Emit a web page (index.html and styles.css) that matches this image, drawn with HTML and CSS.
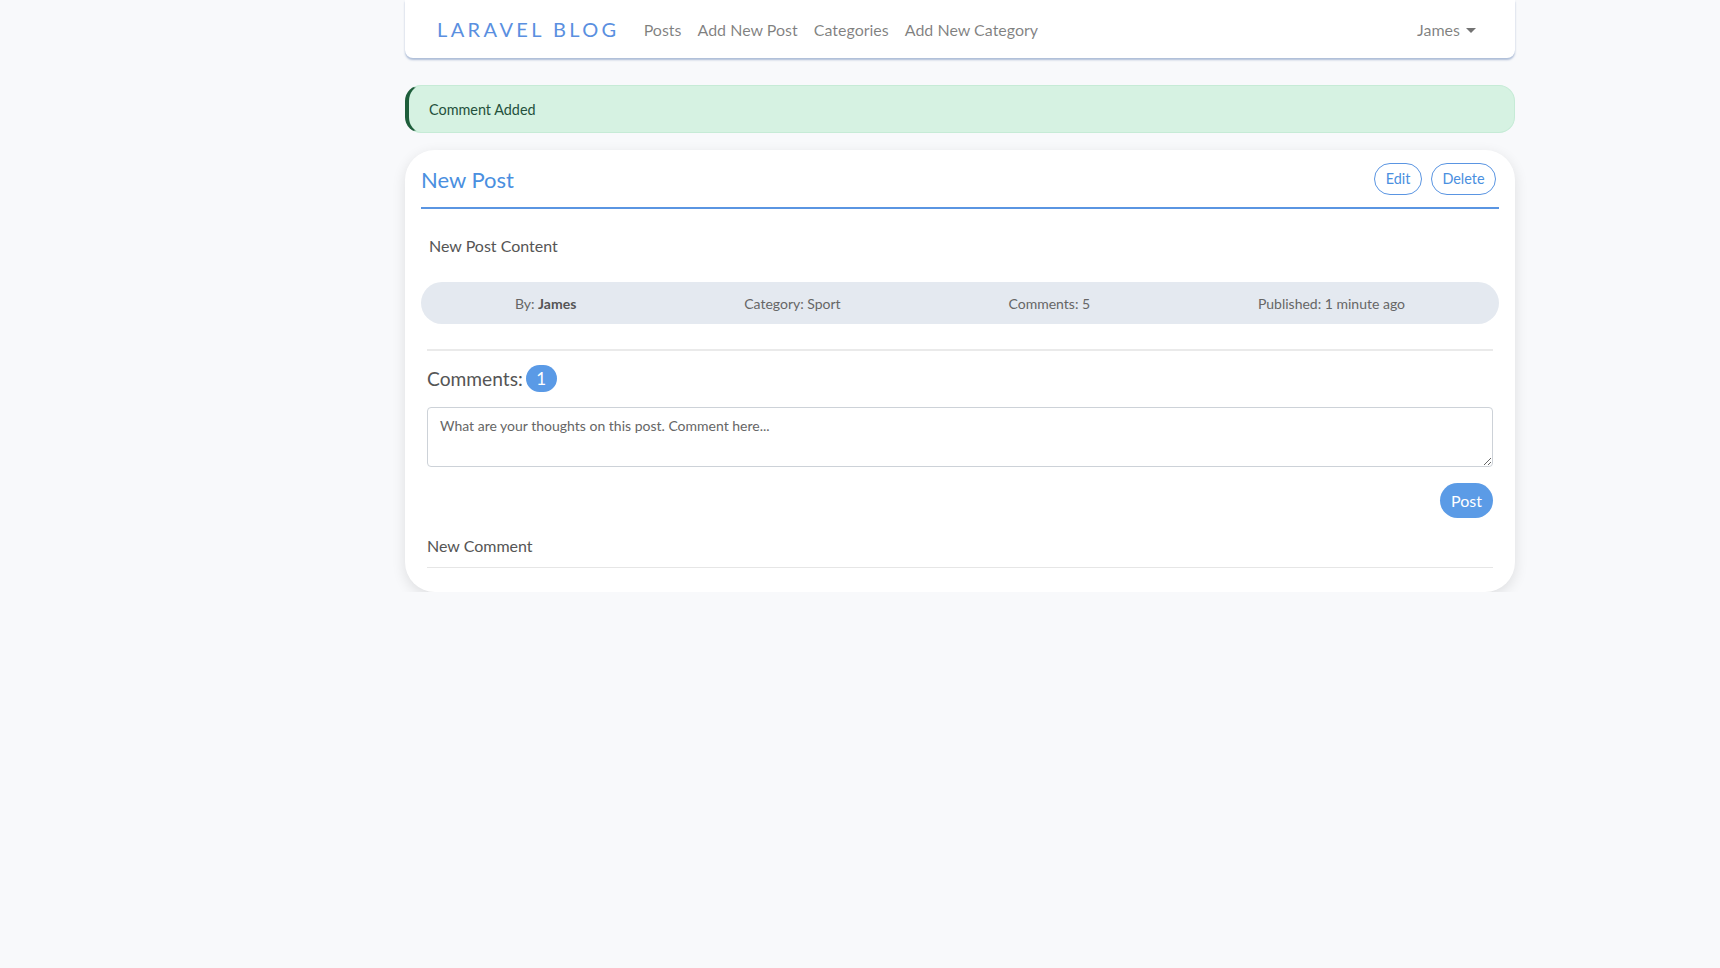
FILE: index.html
```html
<!DOCTYPE html>
<html lang="en">
<head>
<meta charset="utf-8">
<title>Laravel Blog</title>
<link rel="stylesheet" href="styles.css">
</head>
<body>
<div class="page">
  <nav class="navbar">
    <a class="brand" href="#">Laravel Blog</a>
    <ul class="nav-links">
      <li><a href="#">Posts</a></li>
      <li><a href="#">Add New Post</a></li>
      <li><a href="#">Categories</a></li>
      <li><a href="#">Add New Category</a></li>
    </ul>
    <div class="user"><a href="#">James<span class="caret"></span></a></div>
  </nav>

  <div class="alert">Comment Added</div>

  <section class="card">
    <header class="card-header">
      <h2 class="post-title">New Post</h2>
      <div class="actions">
        <button class="btn-outline">Edit</button>
        <button class="btn-outline">Delete</button>
      </div>
    </header>
    <p class="post-content">New Post Content</p>
    <div class="meta">
      <span>By: <b>James</b></span>
      <span>Category: Sport</span>
      <span>Comments: 5</span>
      <span>Published: 1 minute ago</span>
    </div>
    <div class="comments">
      <h3 class="comments-title">Comments: <span class="badge">1</span></h3>
      <form class="comment-form">
        <textarea placeholder="What are your thoughts on this post. Comment here..."></textarea>
        <div class="form-actions"><button type="button" class="btn-primary">Post</button></div>
      </form>
      <div class="comment">New Comment</div>
    </div>
  </section>
</div>
</body>
</html>
```

FILE: styles.css
```css
* { box-sizing: border-box; }
html, body { margin: 0; padding: 0; }
body {
  background: #f8f9fb;
  font-family: Lato, "Open Sans", "Liberation Sans", sans-serif;
  color: #555;
  font-size: 16px;
}
.page {
  width: 1110px;
  margin-left: 405px;
}
.navbar {
  height: 58px;
  background: #fff;
  display: flex;
  align-items: center;
  padding: 0 31px 0 32px;
  border-radius: 0 0 8px 8px;
  box-shadow: 0 2px 2px rgba(100, 130, 180, 0.5);
}
.brand {
  color: #5a8fe0;
  text-decoration: none;
  text-transform: uppercase;
  font-size: 20px;
  letter-spacing: 3.4px;
  margin-right: 16px;
}
.nav-links {
  list-style: none;
  margin: 0;
  padding: 0;
  display: flex;
}
.nav-links a, .user a {
  display: block;
  padding: 0 8px;
  color: rgba(0, 0, 0, 0.5);
  text-decoration: none;
  font-size: 16px;
}
.user { margin-left: auto; }
.caret {
  display: inline-block;
  margin-left: 6px;
  vertical-align: 3px;
  border-top: 5px solid rgba(0, 0, 0, 0.55);
  border-left: 5px solid transparent;
  border-right: 5px solid transparent;
}
.alert {
  margin-top: 27px;
  height: 48px;
  display: flex;
  align-items: center;
  padding-left: 20px;
  background: #d6f2e2;
  border: 1px solid #c6ebd6;
  border-left: 4px solid #1e5e3b;
  border-radius: 16px;
  color: #24513c;
  font-size: 14.4px;
}
.card {
  margin-top: 17px;
  background: #fff;
  border-radius: 30px;
  box-shadow: 0 4px 14px rgba(0, 0, 0, 0.11);
  padding: 13px 16px 24px;
}
.card-header {
  display: flex;
  align-items: center;
  justify-content: space-between;
  padding-bottom: 12px;
  border-bottom: 2px solid #5a95e2;
}
.post-title {
  margin: 0;
  font-weight: 400;
  font-size: 22px;
  color: #4a8fe0;
}
.actions { display: flex; gap: 9px; margin-right: 3px; }
.btn-outline {
  font-family: inherit;
  font-size: 14.4px;
  line-height: 22px;
  padding: 4px 10.5px;
  border: 1px solid #5a95e2;
  background: #fff;
  color: #4a8fe0;
  border-radius: 16px;
}
.post-content {
  margin: 25px 0 0 8px;
  line-height: 24px;
  color: #555;
}
.meta {
  margin-top: 24px;
  height: 42px;
  padding: 0 10px;
  border-radius: 21px;
  background: #e4e9f0;
  display: flex;
  align-items: center;
  justify-content: space-around;
  font-size: 14px;
  color: #666;
}
.meta b { color: #555; }
.comments {
  margin: 25px 6px 0;
  border-top: 2px solid #eaeaea;
}
.comments-title {
  margin: 14px 0 0;
  font-weight: 400;
  font-size: 19.2px;
  display: flex;
  align-items: center;
  gap: 3px;
  color: #555;
}
.badge {
  display: inline-flex;
  align-items: center;
  justify-content: center;
  width: 31px;
  height: 27px;
  border-radius: 14px;
  background: #5a9ae6;
  color: #fff;
  font-size: 17px;
}
.comment-form { margin-top: 15px; }
textarea {
  display: block;
  width: 100%;
  height: 60px;
  border: 1px solid #cdd2d8;
  border-radius: 4px;
  padding: 8px 12px;
  font-family: inherit;
  font-size: 14px;
  line-height: 20px;
  resize: vertical;
}
textarea::placeholder { color: #666; }
.form-actions {
  display: flex;
  justify-content: flex-end;
  margin-top: 16px;
}
.btn-primary {
  font-family: inherit;
  font-size: 16px;
  line-height: 23px;
  padding: 6px 11px;
  border: none;
  border-radius: 18px;
  background: #5b9be6;
  color: #fff;
}
.comment {
  margin-top: 16px;
  line-height: 24px;
  padding-bottom: 9px;
  border-bottom: 1px solid #e6e6e6;
  color: #555;
}
```
